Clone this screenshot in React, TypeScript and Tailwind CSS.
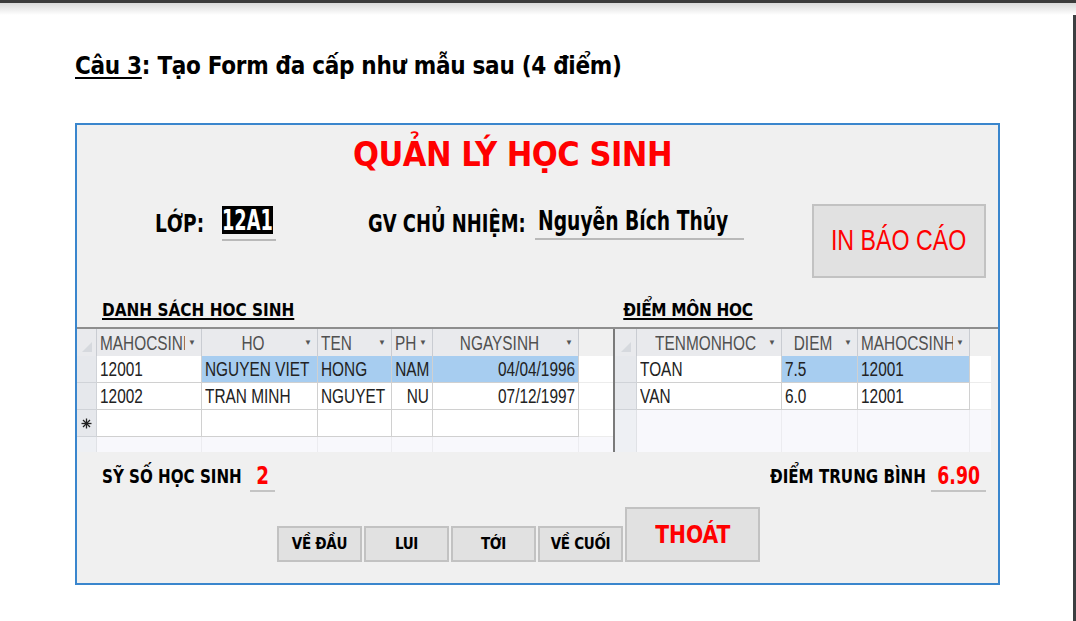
import React from "react";

const hocSinh = [
  { ma: "12001", ho: "NGUYEN VIET", ten: "HONG", phai: "NAM", ngay: "04/04/1996", sel: true },
  { ma: "12002", ho: "TRAN MINH", ten: "NGUYET", phai: "NU", ngay: "07/12/1997", sel: false },
];

const diem = [
  { mon: "TOAN", diem: "7.5", ma: "12001", sel: true },
  { mon: "VAN", diem: "6.0", ma: "12001", sel: false },
];

// chữ hẹp kiểu Arial Narrow
function T({ children, o = "origin-left" }: { children?: React.ReactNode; o?: string }) {
  return <span className={`inline-block whitespace-nowrap scale-x-[0.77] ${o}`}>{children}</span>;
}

function Head({ w, label, center }: { w: string; label: string; center?: boolean }) {
  return (
    <div className={`${w} h-full flex items-center border-r border-[#c9ccd2] pl-[3px] pr-[5px]`}>
      <div className={`flex-1 min-w-0 overflow-hidden ${center ? "text-center" : ""}`}>
        <T o={center ? "origin-center" : "origin-left"}>{label}</T>
      </div>
      <span className="shrink-0 text-[8px] leading-none text-[#555] ml-[3px]">▼</span>
    </div>
  );
}

function Cell({ w, children, right, blue }: { w: string; children?: React.ReactNode; right?: boolean; blue?: boolean }) {
  return (
    <div className={`${w} h-full flex items-center px-[3px] overflow-hidden border-r border-b border-[#d0d0d0] ${right ? "justify-end" : ""} ${blue ? "bg-[#a7cdf0]" : "bg-white"}`}>
      {children !== undefined && <T o={right ? "origin-right" : "origin-left"}>{children}</T>}
    </div>
  );
}

function NewRowMark() {
  return (
    <svg width="11" height="11" viewBox="0 0 11 11" stroke="#222" strokeWidth="1.3">
      <line x1="5.5" y1="0.5" x2="5.5" y2="10.5" />
      <line x1="0.5" y1="5.5" x2="10.5" y2="5.5" />
      <line x1="2" y1="2" x2="9" y2="9" />
      <line x1="9" y1="2" x2="2" y2="9" />
    </svg>
  );
}

const cond = "font-['DejaVu_Sans_Condensed',sans-serif] font-bold";

export default function App() {
  return (
    <div className="w-[1076px] h-[621px] bg-white overflow-hidden flex flex-col">
      <div className="h-[3px] bg-[#3b3b3b]" />
      <div className="h-[12px] bg-gradient-to-b from-[#d9d9d9] to-white" />
      <div className="flex flex-1">
        <div className="flex-1 pl-[75px]">
          <h1 className={`mt-[36px] h-[30px] ${cond} text-[24px] leading-[30px] text-black tracking-[-0.3px] whitespace-nowrap`}>
            <span className="underline underline-offset-[3px] decoration-2">Câu 3</span>: Tạo Form đa cấp như mẫu sau (4 điểm)
          </h1>

          <div className="mt-[42px] w-[925px] h-[462px] border-2 border-[#3a86cd] bg-[#f0f0f0] flex flex-col">
            <div className="h-[60px] flex items-center pl-[276px] pb-[2px]">
              <span className={`${cond} text-[34px] text-[#ff0000] tracking-[-0.5px]`}>QUẢN LÝ HỌC SINH</span>
            </div>

            <div className={`flex items-start mt-[19px] h-[74px] ${cond} text-black`}>
              <div className="ml-[78px] w-[48px] h-[40px] flex items-center">
                <span className="inline-block whitespace-nowrap text-[24px] scale-x-[0.86] origin-left">LỚP:</span>
              </div>
              <div className="ml-[19px] mt-[2px] w-[54px] border-b-2 border-[#b9b9b9] pb-[5px]">
                <div className="w-[51px] h-[28px] bg-black text-white flex items-center">
                  <span className="inline-block whitespace-nowrap text-[29px] leading-[28px] scale-x-[0.68] origin-left">12A1</span>
                </div>
              </div>
              <div className="ml-[92px] w-[155px] h-[40px] flex items-center">
                <span className="inline-block whitespace-nowrap text-[24px] scale-x-[0.83] origin-left">GV CHỦ NHIỆM:</span>
              </div>
              <div className="ml-[12px] w-[209px] border-b-2 border-[#b9b9b9] pl-[3px] h-[36px] flex items-center">
                <span className="inline-block whitespace-nowrap text-[26px] scale-x-[0.8] origin-left">Nguyễn Bích Thủy</span>
              </div>
              <button className="ml-auto mr-[12px] w-[174px] h-[74px] bg-[#e1e1e1] border-2 border-[#c2c2c2] text-[#ff0000] font-normal font-['Liberation_Sans',sans-serif] text-[29px] flex items-center justify-center">
                <span className="inline-block whitespace-nowrap scale-x-[0.8] origin-center">IN BÁO CÁO</span>
              </button>
            </div>

            <div className={`flex h-[49px] items-end pb-[4px] ${cond} text-[17px] text-black`}>
              <span className="ml-[25px] underline underline-offset-2 decoration-2">DANH SÁCH HOC SINH</span>
              <span className="ml-[329px] underline underline-offset-2 decoration-2 tracking-[-0.3px]">ĐIỂM MÔN HOC</span>
            </div>

            <div className="flex h-[125px] border-t-2 border-[#8e8e8e] font-['Liberation_Sans',sans-serif] text-[20px]">
              {/* danh sach hoc sinh */}
              <div className="w-[536px] flex flex-col">
                <div className="h-[27px] flex bg-[#e9eaed] text-[#505050]">
                  <div className="w-[20px] h-full border-r border-[#c9ccd2] relative">
                    <div className="absolute left-[5px] bottom-[4px] w-0 h-0 border-l-[10px] border-l-transparent border-b-[10px] border-b-[#d6d9de]" />
                  </div>
                  <Head w="w-[105px]" label="MAHOCSINH" />
                  <Head w="w-[116px]" label="HO" center />
                  <Head w="w-[74px]" label="TEN" />
                  <Head w="w-[41px]" label="PHAI" />
                  <Head w="w-[146px]" label="NGAYSINH" center />
                  <div className="flex-1 bg-[#f0f0f0]" />
                </div>
                {hocSinh.map((r) => (
                  <div key={r.ma} className="h-[27px] flex text-[#222]">
                    <div className="w-[20px] h-full bg-[#e6e8ec] border-r border-b border-[#d0d3d8]" />
                    <Cell w="w-[105px]">{r.ma}</Cell>
                    <Cell w="w-[116px]" blue={r.sel}>{r.ho}</Cell>
                    <Cell w="w-[74px]" blue={r.sel}>{r.ten}</Cell>
                    <Cell w="w-[41px]" blue={r.sel} right>{r.phai}</Cell>
                    <Cell w="w-[146px]" blue={r.sel} right>{r.ngay}</Cell>
                    <div className="flex-1 bg-white border-b border-[#ececec]" />
                  </div>
                ))}
                <div className="h-[27px] flex">
                  <div className="w-[20px] h-full bg-[#e6e8ec] border-r border-b border-[#d0d3d8] flex items-center justify-center">
                    <NewRowMark />
                  </div>
                  <Cell w="w-[105px]" />
                  <Cell w="w-[116px]" />
                  <Cell w="w-[74px]" />
                  <Cell w="w-[41px]" />
                  <Cell w="w-[146px]" />
                  <div className="flex-1 bg-white border-b border-[#ececec]" />
                </div>
                <div className="flex-1 flex bg-[#f8f8fc]">
                  <div className="w-[20px] bg-[#eef0f4] border-r border-[#e0e2e6]" />
                  <div className="w-[105px] border-r border-[#ececf0]" />
                  <div className="w-[116px] border-r border-[#ececf0]" />
                  <div className="w-[74px] border-r border-[#ececf0]" />
                  <div className="w-[41px] border-r border-[#ececf0]" />
                  <div className="w-[146px] border-r border-[#ececf0]" />
                </div>
              </div>
              <div className="w-[2px] bg-[#7a7a7a]" />
              {/* diem mon hoc */}
              <div className="w-[376px] flex flex-col">
                <div className="h-[27px] flex bg-[#e9eaed] text-[#505050]">
                  <div className="w-[22px] h-full border-r border-[#c9ccd2] relative">
                    <div className="absolute left-[6px] bottom-[4px] w-0 h-0 border-l-[10px] border-l-transparent border-b-[10px] border-b-[#d6d9de]" />
                  </div>
                  <Head w="w-[145px]" label="TENMONHOC" center />
                  <Head w="w-[76px]" label="DIEM" center />
                  <Head w="w-[112px]" label="MAHOCSINH" />
                  <div className="flex-1 bg-[#f0f0f0]" />
                </div>
                {diem.map((r) => (
                  <div key={r.mon} className="h-[27px] flex text-[#222]">
                    <div className="w-[22px] h-full bg-[#e6e8ec] border-r border-b border-[#d0d3d8]" />
                    <Cell w="w-[145px]">{r.mon}</Cell>
                    <Cell w="w-[76px]" blue={r.sel}>{r.diem}</Cell>
                    <Cell w="w-[112px]" blue={r.sel}>{r.ma}</Cell>
                    <div className="flex-1 bg-white border-b border-[#ececec]" />
                  </div>
                ))}
                <div className="flex-1 flex bg-[#f8f8fc]">
                  <div className="w-[22px] bg-[#eef0f4] border-r border-[#e0e2e6]" />
                  <div className="w-[145px] border-r border-[#ececf0]" />
                  <div className="w-[76px] border-r border-[#ececf0]" />
                  <div className="w-[112px] border-r border-[#ececf0]" />
                </div>
              </div>
              <div className="flex-1" />
            </div>

            <div className={`flex items-end h-[40px] ${cond}`}>
              <div className="ml-[25px] w-[139px] mb-[1px]">
                <span className="inline-block whitespace-nowrap text-[20px] text-black scale-x-[0.84] origin-left">SỸ SỐ HỌC SINH</span>
              </div>
              <div className="ml-[9px] w-[25px] border-b-2 border-[#c4c4c4] text-center text-[24px] leading-[28px] text-[#ff0000]">
                <span className="inline-block scale-x-[0.85] origin-center">2</span>
              </div>
              <div className="ml-auto w-[160px] mb-[1px]">
                <span className="inline-block whitespace-nowrap text-[20px] text-black scale-x-[0.84] origin-left">ĐIỂM TRUNG BÌNH</span>
              </div>
              <div className="ml-[1px] mr-[12px] w-[55px] border-b-2 border-[#c4c4c4] text-center text-[24px] leading-[28px] text-[#ff0000]">
                <span className="inline-block whitespace-nowrap scale-x-[0.8] origin-center">6.90</span>
              </div>
            </div>

            <div className={`flex items-end mt-[15px] ml-[200px] gap-[2px] ${cond}`}>
              {["VỀ ĐẦU", "LUI", "TỚI", "VỀ CUỐI"].map((t) => (
                <button key={t} className="w-[85px] h-[36px] bg-[#e1e1e1] border-2 border-[#c2c2c2] text-[15px] text-black tracking-[-0.3px]">{t}</button>
              ))}
              <button className="w-[135px] h-[55px] bg-[#e1e1e1] border-2 border-[#c2c2c2] text-[25px] text-[#ff0000] flex items-center justify-center">
                <span className="inline-block scale-x-[0.9] origin-center">THOÁT</span>
              </button>
            </div>
          </div>
        </div>
        <div className="w-[3px] bg-[#3c3f41]" />
      </div>
    </div>
  );
}
